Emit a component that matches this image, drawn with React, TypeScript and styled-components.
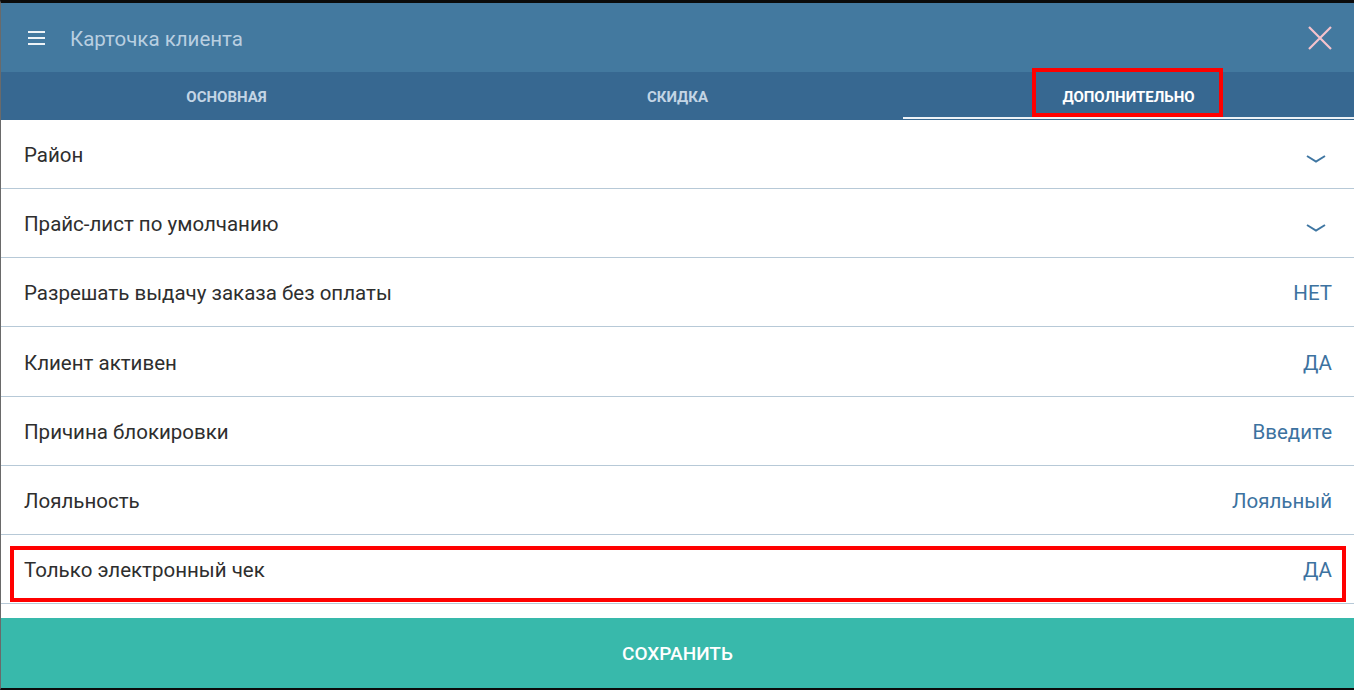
import React from "react";
import styled, { createGlobalStyle } from "styled-components";

const Global = createGlobalStyle`
  html, body { margin: 0; padding: 0; background: #000; }
  body { font-family: Roboto, "Noto Sans", "Liberation Sans", sans-serif; }
  * { box-sizing: border-box; }
`;

const Frame = styled.div`
  width: 1354px;
  height: 690px;
  display: flex;
  flex-direction: column;
  background: #fff;
  border-top: 3px solid #0b0b0b;
  border-bottom: 2px solid #0b0b0b;
  border-left: 1px solid #6a6a6a;
  overflow: hidden;
`;

const Header = styled.header`
  height: 69px;
  flex: none;
  display: flex;
  align-items: center;
  background: #43799f;
  padding: 0 21px 0 27px;
`;

const MenuButton = styled.div`
  width: 17px;
  display: flex;
  flex-direction: column;
  gap: 4px;
  margin-right: 25px;
  span {
    display: block;
    height: 2px;
    background: #eef3f7;
  }
`;

const Title = styled.h1`
  flex: 1;
  margin: 0;
  font-size: 20.5px;
  font-weight: 400;
  color: #b9cfe1;
  padding-top: 2px;
`;

const Close = styled.div`
  width: 26px;
  height: 26px;
  display: flex;
  align-items: center;
  justify-content: center;
`;

const Tabs = styled.nav`
  height: 48px;
  flex: none;
  display: grid;
  grid-template-columns: repeat(3, 1fr);
  background: #376891;
`;

const Tab = styled.div<{ $active?: boolean }>`
  position: relative;
  display: flex;
  align-items: center;
  justify-content: center;
  font-size: 15px;
  font-weight: 700;
  text-transform: uppercase;
  color: ${(p) => (p.$active ? "#ffffff" : "#c3d5e5")};
  padding-top: 2px;
  &::after {
    content: "";
    position: absolute;
    left: 0;
    right: 0;
    bottom: 1px;
    height: 2px;
    background: ${(p) => (p.$active ? "#eef3f7" : "transparent")};
  }
`;

const TabLabel = styled.span`
  position: relative;
`;

const TabMark = styled.span`
  position: absolute;
  left: -30px;
  right: -28px;
  top: -20px;
  bottom: -11px;
  border: 4px solid #ff0000;
  pointer-events: none;
`;

const List = styled.div`
  flex: 1;
  display: flex;
  flex-direction: column;
`;

const Row = styled.div`
  position: relative;
  height: 69px;
  flex: none;
  display: flex;
  align-items: center;
  justify-content: space-between;
  padding: 2px 22px 0 23px;
  border-bottom: 1px solid #b7c9d7;
  &:nth-child(4) { height: 70px; }
`;

const Label = styled.span`
  font-size: 20.5px;
  color: #2e2e2e;
`;

const Value = styled.span`
  font-size: 20.5px;
  color: #3c72a0;
`;

const Chevron = styled.svg`
  width: 20px;
  height: 8px;
  margin-right: 6px;
  margin-top: 8px;
`;

const RowMark = styled.span`
  position: absolute;
  left: 9px;
  right: 8px;
  top: 11px;
  bottom: 1px;
  border: 4px solid #ff0000;
  pointer-events: none;
`;

const SaveButton = styled.button`
  flex: none;
  height: 70px;
  margin-top: 13px;
  border: none;
  background: #38b9ab;
  color: #ffffff;
  font-family: Roboto, "Noto Sans", sans-serif;
  font-size: 19px;
  font-weight: 500;
  text-transform: uppercase;
`;

const ChevronIcon = () => (
  <Chevron viewBox="0 0 20 8">
    <path d="M1 1 L10 6.5 L19 1" fill="none" stroke="#3f76a2" strokeWidth="2" />
  </Chevron>
);

type Item = { label: string; value?: string; select?: boolean; marked?: boolean };

const items: Item[] = [
  { label: "Район", select: true },
  { label: "Прайс-лист по умолчанию", select: true },
  { label: "Разрешать выдачу заказа без оплаты", value: "НЕТ" },
  { label: "Клиент активен", value: "ДА" },
  { label: "Причина блокировки", value: "Введите" },
  { label: "Лояльность", value: "Лояльный" },
  { label: "Только электронный чек", value: "ДА", marked: true },
];

export default function App() {
  return (
    <>
      <Global />
      <Frame>
        <Header>
          <MenuButton>
            <span />
            <span />
            <span />
          </MenuButton>
          <Title>Карточка клиента</Title>
          <Close>
            <svg width="26" height="26" viewBox="0 0 26 26">
              <path d="M2 2 L24 24 M24 2 L2 24" stroke="#f6c3cc" strokeWidth="2.2" />
            </svg>
          </Close>
        </Header>
        <Tabs>
          <Tab>Основная</Tab>
          <Tab>Скидка</Tab>
          <Tab $active>
            <TabLabel>
              Дополнительно
              <TabMark />
            </TabLabel>
          </Tab>
        </Tabs>
        <List>
          {items.map((it) => (
            <Row key={it.label}>
              <Label>{it.label}</Label>
              {it.select ? <ChevronIcon /> : <Value>{it.value}</Value>}
              {it.marked && <RowMark />}
            </Row>
          ))}
        </List>
        <SaveButton>Сохранить</SaveButton>
      </Frame>
    </>
  );
}
